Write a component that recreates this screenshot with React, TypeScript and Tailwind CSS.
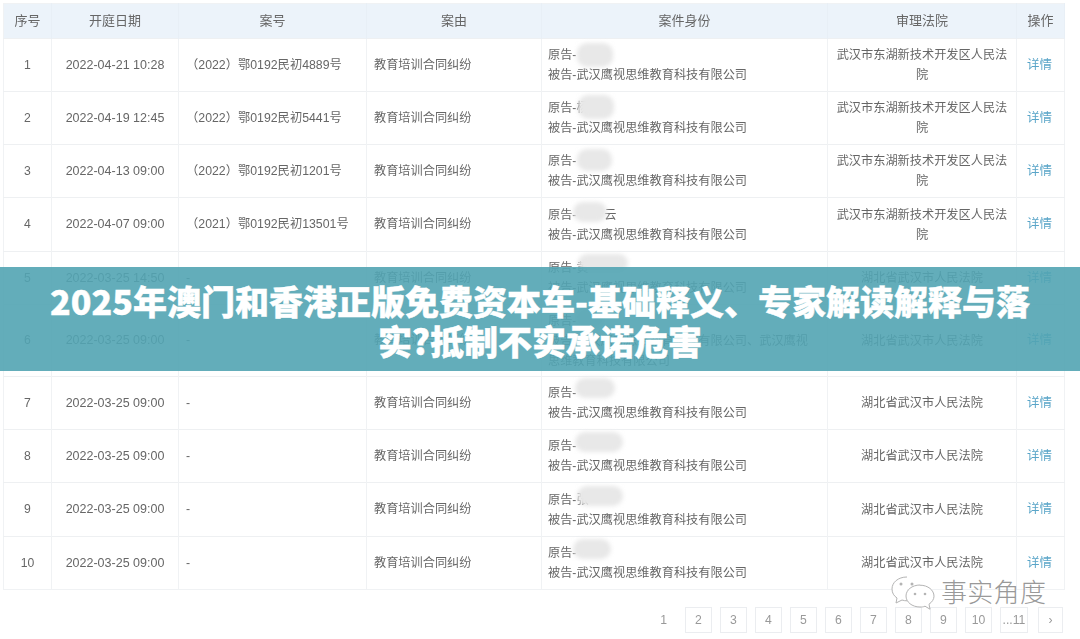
const font = "[font-family:'Liberation_Sans','Noto_Sans_CJK_SC',sans-serif]"

const columns = [48, 127, 188, 175, 286, 189, 48]
const headers = ['序号', '开庭日期', '案号', '案由', '案件身份', '审理法院', '操作']

const company = '被告-武汉鹰视思维教育科技有限公司'
const eastLake = '武汉市东湖新技术开发区人民法院'
const hubei = '湖北省武汉市人民法院'

interface CaseRow {
  date: string
  no: string
  name: string
  blob: string
  height: string
  defendant?: string
  court: string
}

const rows: CaseRow[] = [
  { date: '2022-04-21 10:28', no: '（2022）鄂0192民初4889号', name: '', blob: 'left-[29px] -top-[2px] h-[24px] w-[36px]', height: 'h-[53px]', court: eastLake },
  { date: '2022-04-19 12:45', no: '（2022）鄂0192民初5441号', name: '杨', blob: 'left-[30px] -top-[3px] h-[24px] w-[36px]', height: 'h-[53px]', court: eastLake },
  { date: '2022-04-13 09:00', no: '（2022）鄂0192民初1201号', name: '', blob: 'left-[29px] -top-[2px] h-[22px] w-[35px]', height: 'h-[53px]', court: eastLake },
  { date: '2022-04-07 09:00', no: '（2021）鄂0192民初13501号', name: '　　 云', blob: 'left-[25px] -top-[3px] h-[20px] w-[34px]', height: 'h-[54px]', court: eastLake },
  { date: '2022-03-25 14:50', no: '-', name: '黄', blob: 'left-[30px] -top-[4px] h-[18px] w-[50px]', height: 'h-[53px]', court: hubei },
  { date: '2022-03-25 09:00', no: '-', name: '', blob: 'left-[27px] -top-[3px] h-[20px] w-[30px]', height: 'h-[72px]', defendant: '被告-武汉鹰视思维教育科技有限公司、武汉鹰视思维教育科技有限公司', court: hubei },
  { date: '2022-03-25 09:00', no: '-', name: '', blob: 'left-[27px] -top-[5px] h-[20px] w-[40px]', height: 'h-[53px]', court: hubei },
  { date: '2022-03-25 09:00', no: '-', name: '', blob: 'left-[27px] -top-[4px] h-[20px] w-[48px]', height: 'h-[53px]', court: hubei },
  { date: '2022-03-25 09:00', no: '-', name: '张', blob: 'left-[29px] -top-[4px] h-[20px] w-[46px]', height: 'h-[54px]', court: hubei },
  { date: '2022-03-25 09:00', no: '-', name: '', blob: 'left-[25px] -top-[4px] h-[20px] w-[38px]', height: 'h-[53px]', court: hubei },
]

const pages = ['2', '3', '4', '5', '6', '7', '8', '9', '10', '...11']

function WeChatMark() {
  return (
    <svg width="46" height="36" viewBox="0 0 46 36" fill="none" stroke="#b4b4b4" strokeWidth="1">
      <path d="M17 2C8 2 2 7.500 2 14c0 4 2 7 5 9l-1 5 6-3c2 .600 3 .800 5 .800" fill="#fff" />
      <path d="M30 10c-8 0-14 5-14 11s6 11 14 11c2 0 3 0 5-.800l5 3-1-5c3-2 5-5 5-8 0-6-6-11-14-11z" fill="#fff" />
      <circle cx="11" cy="9" r="1.500" fill="#b4b4b4" stroke="none" />
      <circle cx="22" cy="9" r="1.500" fill="#b4b4b4" stroke="none" />
      <circle cx="25" cy="19" r="1.300" fill="#b4b4b4" stroke="none" />
      <circle cx="35" cy="19" r="1.300" fill="#b4b4b4" stroke="none" />
    </svg>
  )
}

export default function App() {
  return (
    <div className={`relative h-[639px] w-[1080px] overflow-hidden bg-white text-[12.2px] text-[#666] ${font}`}>
      <div className="pl-[3px] pt-[3px] blur-[0.4px]">
        <table className="w-[1061px] table-fixed border-collapse border border-[#f0f2f4]">
          <colgroup>
            {columns.map((w, i) => (
              <col key={i} style={{ width: w }} />
            ))}
          </colgroup>
          <thead>
            <tr className="h-[35px] bg-[#ecf3fa]">
              {headers.map((h) => (
                <th key={h} className="border-r border-[#e8eff6] text-center text-[13px] font-normal text-[#666]">
                  {h}
                </th>
              ))}
            </tr>
          </thead>
          <tbody>
            {rows.map((row, i) => (
              <tr key={i} className={`border-t border-[#eef0f2] ${row.height}`}>
                <td className="border-r border-[#f0f2f4] text-center">{i + 1}</td>
                <td className="border-r border-[#f0f2f4] text-center text-[12.5px]">{row.date}</td>
                <td className="border-r border-[#f0f2f4] pl-[7px] text-[12.3px]">{row.no}</td>
                <td className="border-r border-[#f0f2f4] pl-[7px]">教育培训合同纠纷</td>
                <td className="border-r border-[#f0f2f4] pl-[6px] pr-[14px] leading-[20px]">
                  <div className="relative">
                    原告-{row.name}
                    <span className={`absolute rounded-[10px] bg-[#e8e8e8] blur-[2px] ${row.blob}`} />
                  </div>
                  <div>{row.defendant ?? company}</div>
                </td>
                <td className="border-r border-[#f0f2f4] px-[7px] text-center leading-[20px]">{row.court}</td>
                <td className="pr-[2px] text-center text-[12.5px] text-[#5aa5c8]">详情</td>
              </tr>
            ))}
          </tbody>
        </table>

        <nav className="mt-[17px] flex h-[26px] w-[1061px] items-center justify-end gap-[8px] pr-[1px] text-[#999]">
          <span className="mr-[10px]">1</span>
          {pages.map((p) => (
            <span key={p} className={`flex h-[26px] items-center justify-center border border-[#ebedf0] ${p === '...11' ? 'w-[28px]' : 'w-[27px]'}`}>
              {p}
            </span>
          ))}
          <span className="ml-[2px] flex h-[26px] w-[25px] items-center justify-center border border-[#ebedf0]">›</span>
        </nav>
      </div>

      <div className="absolute left-[890px] top-[575px] flex items-center gap-[5px]">
        <WeChatMark />
        <span className="text-[26px] font-light leading-[32px] tracking-[0.3px] text-[#999]">事实角度</span>
      </div>

      <div className="absolute left-0 top-[267px] flex h-[104px] w-full items-center justify-center bg-[#52a4b3]/90 px-[40px] pt-[4px] text-center">
        <h1 className="[font-family:'Noto_Sans_CJK_SC',sans-serif] text-[34px] font-black leading-[40px] text-white [-webkit-text-stroke:0.4px_white]">
          2025年澳门和香港正版免费资本车-基础释义、专家解读解释与落实?抵制不实承诺危害
        </h1>
      </div>
    </div>
  )
}
